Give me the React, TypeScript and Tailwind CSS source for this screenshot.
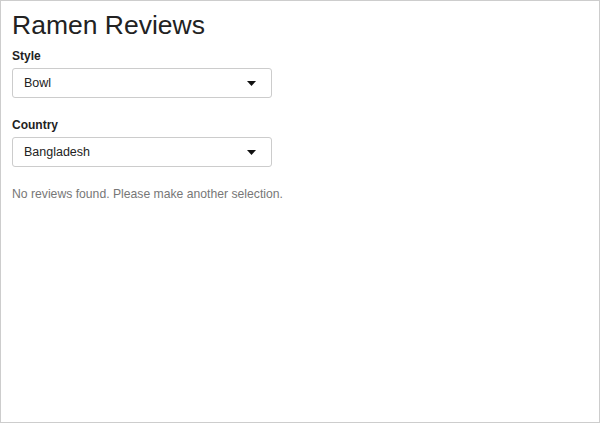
import React from 'react';

function Select({ label, value }: { label: string; value: string }) {
  return (
    <div className="flex flex-col">
      <label className="text-[12px] leading-[16px] font-bold text-[#222]">{label}</label>
      <div className="mt-[4px] w-[260px] h-[30px] border border-[#cccccc] rounded-[3px] bg-white flex items-center justify-between pl-[11px] pr-[15px]">
        <span className="text-[12.5px] leading-[16px] text-[#222]">{value}</span>
        <svg width="9" height="5" viewBox="0 0 9 5" className="mt-[1px]">
          <path d="M0 0 H9 L4.5 5 Z" fill="#111" />
        </svg>
      </div>
    </div>
  );
}

export default function App() {
  return (
    <div
      className="w-[600px] h-[423px] border border-[#cdcdcd] bg-white px-[11px] overflow-hidden"
      style={{ fontFamily: '"Liberation Sans", Arial, sans-serif' }}
    >
      <h1 className="mt-[9px] text-[26.5px] leading-[30px] text-[#222] font-normal">Ramen Reviews</h1>
      <div className="mt-[8px]">
        <Select label="Style" value="Bowl" />
      </div>
      <div className="mt-[19px]">
        <Select label="Country" value="Bangladesh" />
      </div>
      <p className="mt-[19px] text-[12.2px] leading-[16px] text-[#777]">
        No reviews found. Please make another selection.
      </p>
    </div>
  );
}
